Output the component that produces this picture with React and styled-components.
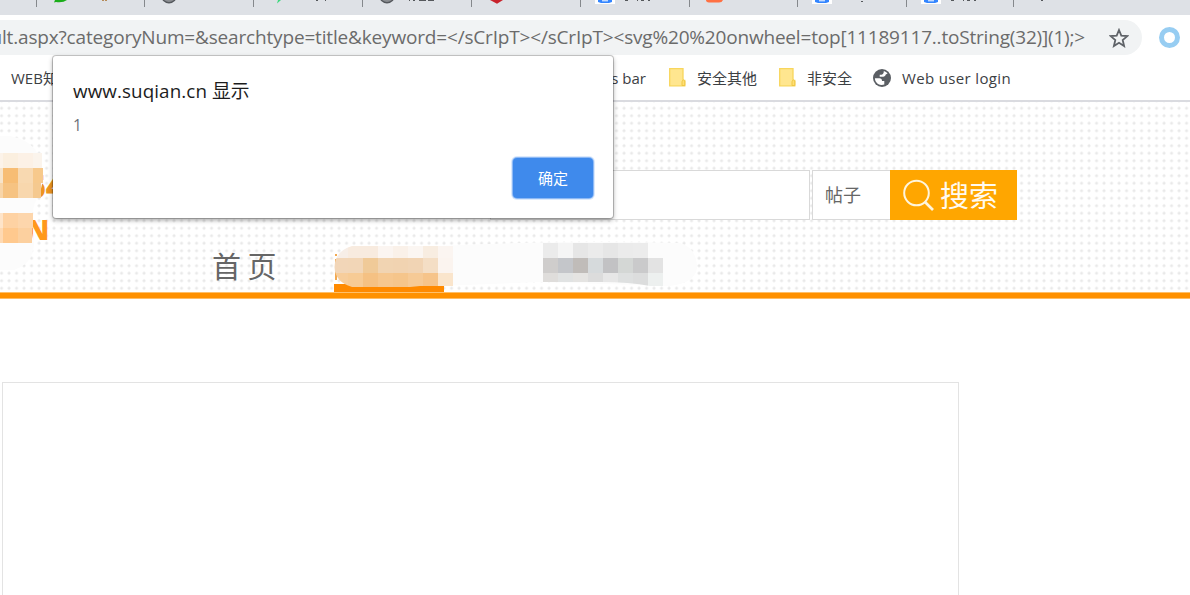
import React from 'react';
import styled, { createGlobalStyle } from 'styled-components';

const Global = createGlobalStyle`
  * { box-sizing: border-box; }
  body { margin: 0; background: #fff; overflow: hidden; font-family: "Open Sans", "Noto Sans CJK SC", sans-serif; }
`;
const Page = styled.div`
  position: relative; width: 1190px; height: 595px; overflow: hidden; display: flex; flex-direction: column;
`;
const TabStrip = styled.div`
  display: flex; height: 15px; flex: none; background: #dee1e6;
`;
const Tab = styled.div`
  width: ${p => p.$w}px; height: 7px; flex: none; overflow: hidden;
  border-right: 1px solid ${p => (p.$last ? 'transparent' : '#85888c')};
  svg { display: block; }
`;
const AddressRow = styled.div`
  display: flex; align-items: center; height: 40px; padding-top: 5px; flex: none;
`;
const Omnibox = styled.div`
  display: flex; align-items: center; justify-content: flex-end; width: 1142px; height: 35px;
  padding-right: 13px; background: #f1f3f4; border-radius: 0 18px 18px 0; overflow: hidden;
  svg { flex: none; margin-left: 24px; }
`;
const Url = styled.div`
  white-space: pre; font-size: 19px; line-height: 35px; color: #6b6b6b;
`;
const UrlPart = styled.span`
  letter-spacing: ${p => p.$spacing}px;
`;
const Ring = styled.div`
  width: 21px; height: 21px; margin-left: 17px; border: 5.5px solid #97cdf2; border-radius: 50%;
`;
const Bookmarks = styled.div`
  display: flex; align-items: center; height: 47px; flex: none; padding-left: 11px;
  border-bottom: 2px solid #dadbe0; font-size: 15px; color: #3c4043; white-space: pre;
`;
const Bookmark = styled.div`
  display: flex; align-items: center; flex: none; width: ${p => p.$w}px; gap: ${p => p.$gap || 0}px;
  padding-right: ${p => p.$pad || 0}px;
  justify-content: ${p => (p.$end ? 'flex-end' : 'flex-start')};
  letter-spacing: ${p => p.$ls || 0}px;
`;
const SiteHeader = styled.header`
  position: relative; height: 190px; flex: none; padding-top: 68px; background-color: #fff;
  background-image: radial-gradient(circle, #e9e9e9 1.1px, rgba(233,233,233,0) 1.8px);
  background-size: 7.5px 7.5px; background-position: -2.2px 2.5px;
`;
const SearchRow = styled.div`
  display: flex; height: 50px; padding-left: 490px;
`;
const SearchInput = styled.div`
  width: 320px; margin-right: 2px; background: #fff; border: 1px solid #d9d9d9;
`;
const TypeSelect = styled.div`
  width: 78px; padding-left: 12px; background: #fff; border: 1px solid #d9d9d9; border-right: 0;
  font-size: 18px; line-height: 49px; color: #666;
`;
const SearchButton = styled.div`
  display: flex; align-items: center; width: 127px; padding-left: 12px; gap: 5px;
  background: #ffa600; color: #fffaf0; font-size: 29px; line-height: 50px;
`;
const SearchLabel = styled.span`
  padding-top: 1px;
`;
const Nav = styled.nav`
  display: flex; align-items: flex-end; height: 72px; padding-left: 212px;
`;
const NavItem = styled.div`
  width: 122px; height: 50px; font-size: 29px; line-height: 50px; word-spacing: -1px; color: #666;
`;
const ActiveMark = styled.div`
  width: 110px; height: 8px; background: #ff8a00;
`;
const Rule = styled.div`
  height: 7px; flex: none; background: #ff9100; border-top: 1px solid #ffc06a; border-bottom: 1px solid #ffbd66;
`;
const Covers = styled.svg`
  position: absolute; left: 0; top: 0;
`;
const LogoText = styled.div`
  position: absolute; left: ${p => p.$x}px; top: ${p => p.$y}px; color: ${p => p.$c};
  font: 900 ${p => p.$s}px/1 "Open Sans", sans-serif;
`;
const Main = styled.main`
  padding: 83px 0 0 2px;
`;
const Panel = styled.section`
  width: 957px; height: 230px; border: 1px solid #e3e3e3;
`;
const Dialog = styled.div`
  position: absolute; left: 53px; top: 56px; width: 560px; height: 162px; padding: 21px 20px 20px 20px;
  display: flex; flex-direction: column; background: #fff; border-radius: 3px;
  box-shadow: 0 0 0 1px rgba(0,0,0,.2), 0 2px 5px rgba(0,0,0,.38);
`;
const DialogTitle = styled.div`
  font-size: 18.8px; line-height: 28px; color: #1c1c1c; white-space: pre; letter-spacing: 0.1px;
`;
const DialogMessage = styled.div`
  margin-top: 7px; font-size: 15.5px; line-height: 26px; color: #6b6f78;
`;
const OkButton = styled.div`
  width: 80px; height: 40px; margin: auto 0 0 auto; background: #3f8aec; border-radius: 4px; color: #fff;
  font-size: 15px; line-height: 41px; text-align: center; box-shadow: 0 0 0 1px #8db9f5, 0 0 0 2px #dbe9fc;
`;

const Globe = ({ size = 18 }) => (
  <svg width={size} height={size} viewBox="0 0 18 18">
    <circle cx="9" cy="9" r="9" fill="#5b5f64" />
    <path d="M1.900 9.300H6.500Q9 9.300 9 12H11.300V15.600Q8 16.800 5 15Q2 13 1.900 9.300ZM10.800 2Q13.300 2.700 14.600 4.600L12.800 5.500Q12.500 7.500 10.300 7.700H6.700V5.800H8.600Q10.800 5.300 10.800 2Z" fill="#fff" />
  </svg>
);
const Folder = () => (
  <svg width="17" height="19" viewBox="0 0 17 19">
    <path d="M.7.7H14V12.500H15.800V17.800H.7Z" fill="#ffe68f" stroke="#f8d65c" strokeWidth="1.300" />
    <path d="M13 17.500V13.200Q14.500 10.800 15.800 13V17.500Z" fill="#ffdf75" stroke="#efc743" />
  </svg>
);

const marks = {
  chat: <><path d="M18 0H30Q26 3 19 2L17 2.500Z" fill="#1aad19" /><path d="M65 .5H71" stroke="#b58a58" strokeWidth="1" strokeDasharray="2 1" /></>,
  globe: <path d="M18 0Q24 5.500 30 0" fill="#8b8e92" stroke="#55585d" strokeWidth="1.500" />,
  green: <path d="M21 0H27L23 3.500 24 0Z" fill="#3fd97f" />,
  red: <path d="M18 0H31L25 3.800Z" fill="#c8232c" />,
  paw: <><path d="M14 0H34V4H14Z" fill="#fff" /><path d="M17 0H31V2L28 3H20L17 2Z" fill="#3385ff" /><path d="M21 .8H27" stroke="#fff" /></>,
  orange: <path d="M16 0H33Q32 2.500 29 2.500H19Q16 2 16 0Z" fill="#ff7043" />,
  none: null,
};
const pawTitle = 'M44 .5H47M56 .5H57M60 .5H63M67 .5H69';
const tabs = [
  [37, 'none', ''], [108, 'chat', ''], [109, 'globe', ''], [109, 'green', 'M62 .5H64M71 .5H72'],
  [109, 'globe', 'M46 .5H47M50 .5H52M56 .5H63M65 .5H71'], [109, 'red', ''], [109, 'paw', pawTitle],
  [108, 'orange', ''], [109, 'paw', 'M63 1.500H65'], [107, 'paw', pawTitle], [177, 'none', 'M27 .5H29'],
];

const urlParts = [
  ['ult.aspx?categoryNum=&searchtype=title&keyword=', -0.17],
  ['</sCrIpT></sCrIpT>', -0.18],
  ['<svg%20%20onwheel=top[11189117..toString(32)](1);>', -0.19],
];

const logoBlocks = [
  [0, 153, 3, 15, '#fcf3e9'], [3, 153, 15, 15, '#fbefdf'], [18, 153, 15, 15, '#fcf1e6'], [33, 153, 9, 15, '#fbf4ec'],
  [0, 168, 3, 15, '#f7e4ca'], [3, 168, 15, 15, '#f7bd74'], [18, 168, 15, 15, '#f8d9b1'], [33, 168, 10, 15, '#f7c98c'],
  [0, 183, 3, 15, '#f8d5a8'], [3, 183, 15, 15, '#f6c382'], [18, 183, 15, 15, '#f8d7ad'], [33, 183, 8, 15, '#f5c98f'],
  [0, 213, 3, 15, '#fee4c9'], [3, 213, 15, 15, '#fed2a3'], [18, 213, 15, 15, '#fdd6ac'],
  [0, 228, 3, 15, '#fed9b2'], [3, 228, 15, 15, '#ffc98e'], [18, 228, 14, 15, '#fcd09f'],
];
const row = (x, y, w, h, cols) => cols.map((c, i) => [x + i * w, y, w, h, c]);
const navBlocks = [
  ...row(333, 246, 15, 12, ['#f7eee7', '#f8ebdf', '#f8ebdf', '#fbf5f1', '#faf1e9', '#fbf6f2', '#f8ede1', '#fbf5f1']),
  ...row(333, 258, 15, 15, ['#f2d6b8', '#f2d6b7', '#f0ca98', '#f1d4b2', '#f1d3b1', '#f1d4b4', '#f4dec5', '#fbf4ef']),
  ...row(333, 273, 15, 14, ['#f7cd9b', '#f7cb95', '#f5c183', '#f6c78f', '#f5c58b', '#f6ca96', '#f6c48a', '#fae5cc']),
];
const greyBlocks = [
  ...row(543, 243, 15, 15, ['#ebebeb', '#f5f5f5', '#e6e6e6', '#ebebeb', '#e6e6e6', '#ebebeb', '#ececec']),
  ...row(543, 258, 15, 15, ['#cfcdcc', '#c4c6ca', '#c0bcb9', '#d6dadc', '#c2c2c4', '#d4d7d5', '#cacacb', '#e3e3e3']),
  ...row(543, 273, 15, 13, ['#dfdddb', '#e1e3e3', '#e5e4e2', '#dcdcdc', '#e7e7e7', '#dee0e0', '#dcdddd', '#edf0ef']),
];
const Blocks = ({ items }) => items.map(([x, y, w, h, c], i) => (
  <rect key={i} x={x} y={y} width={w} height={h} fill={c} shapeRendering="crispEdges" />
));

export default function App() {
  return (
    <Page>
      <Global />
      <TabStrip>
        {tabs.map(([w, kind, title], i) => (
          <Tab key={i} $w={w} $last={i === tabs.length - 1}>
            <svg width={w - 1} height="7">{marks[kind]}<path d={title} stroke="#55585c" strokeWidth="1" /></svg>
          </Tab>
        ))}
      </TabStrip>
      <AddressRow>
        <Omnibox>
          <Url>
            {urlParts.map(([text, spacing]) => <UrlPart key={text} $spacing={spacing}>{text}</UrlPart>)}
          </Url>
          <svg width="20" height="20" viewBox="0 0 20 20">
            <path d="M10 2 12.300 7.600 18.300 8.100 13.700 12 15.100 18 10 14.800 4.900 18 6.300 12 1.700 8.100 7.700 7.600Z" fill="none" stroke="#5f6368" strokeWidth="1.800" />
          </svg>
        </Omnibox>
        <Ring />
      </AddressRow>
      <Bookmarks>
        <Bookmark $w={100}>WEB知识</Bookmark>
        <Bookmark $w={558} $end $pad={23}>bookmarks bar</Bookmark>
        <Bookmark $w={110} $gap={11}><Folder />安全其他</Bookmark>
        <Bookmark $w={94} $gap={11}><Folder />非安全</Bookmark>
        <Bookmark $w={200} $gap={11} $ls={0.35}><Globe />Web user login</Bookmark>
      </Bookmarks>
      <SiteHeader>
        <SearchRow>
          <SearchInput />
          <TypeSelect>帖子</TypeSelect>
          <SearchButton>
            <svg width="33" height="33" viewBox="0 0 33 33" fill="none" stroke="#fff5dc" strokeWidth="2">
              <circle cx="14.500" cy="14" r="12.300" /><path d="M23 23 31 31" strokeWidth="2.600" />
            </svg>
            <SearchLabel>搜索</SearchLabel>
          </SearchButton>
        </SearchRow>
        <Nav>
          <NavItem>首 页</NavItem>
          <ActiveMark />
        </Nav>
        <LogoText $x={27} $y={68} $s={32} $c="#ee9420">64</LogoText>
        <LogoText $x={26} $y={113} $s={28} $c="#ff981c">N</LogoText>
        <Covers width="1190" height="190" viewBox="0 102 1190 190">
          <path d="M0 136H10Q43 142 43 177Q42 190 37 198Q31 210 31 228L34 244Q33 264 14 270H0Z" fill="#fcfcfc" />
          <Blocks items={logoBlocks} />
          <path d="M440 246Q560 240 680 243Q697 248 697 268Q695 283 670 286L540 282 440 286Z" fill="#fcfcfc" />
          <clipPath id="pill"><path d="M352 246 453 245V286H420L410 287H352Q335 282 334.500 267 335 251 352 246Z" /></clipPath>
          <path d="M336 254V280" stroke="#ee8d18" strokeWidth="1.500" strokeDasharray="2 3 21" />
          <g clipPath="url(#pill)"><Blocks items={navBlocks} /></g>
          <clipPath id="grey"><path d="M543 243H648V258H663V286H650Q630 282 600 282H543Z" /></clipPath>
          <g clipPath="url(#grey)"><Blocks items={greyBlocks} /></g>
        </Covers>
      </SiteHeader>
      <Rule />
      <Main><Panel /></Main>
      <Dialog>
        <DialogTitle>www.suqian.cn 显示</DialogTitle>
        <DialogMessage>1</DialogMessage>
        <OkButton>确定</OkButton>
      </Dialog>
    </Page>
  );
}
